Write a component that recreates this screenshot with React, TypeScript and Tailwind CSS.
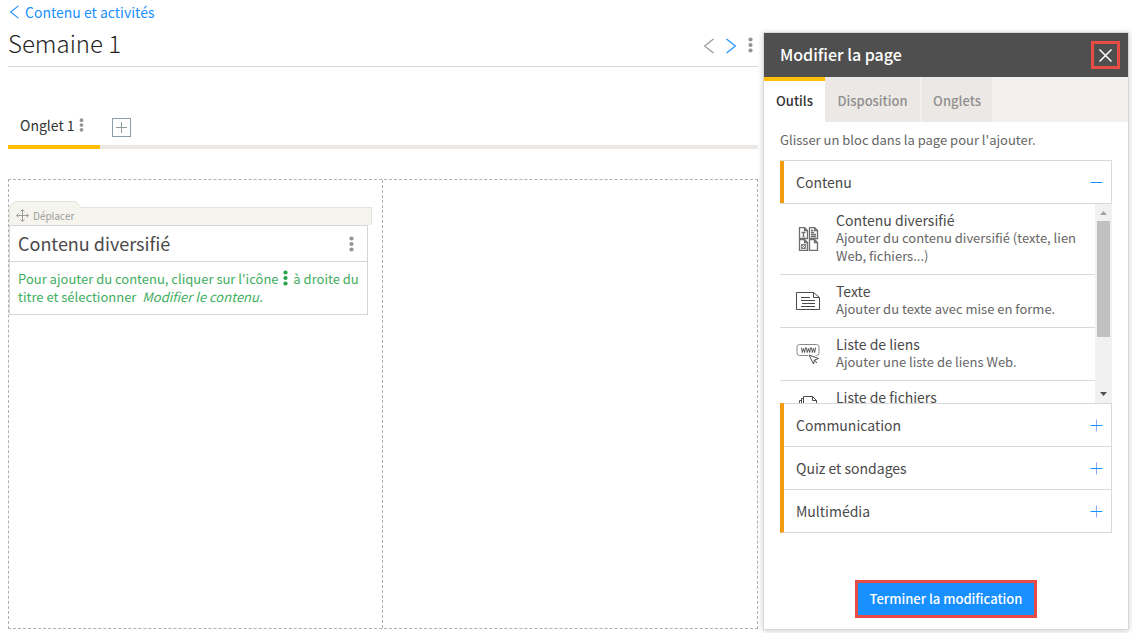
import { useState } from "react";

const tools = [
  {
    id: "mixed",
    title: "Contenu diversifié",
    description: "Ajouter du contenu diversifié (texte, lien Web, fichiers...)",
    icon: <MixedIcon />,
  },
  {
    id: "text",
    title: "Texte",
    description: "Ajouter du texte avec mise en forme.",
    icon: <TextIcon />,
  },
  {
    id: "links",
    title: "Liste de liens",
    description: "Ajouter une liste de liens Web.",
    icon: <LinksIcon />,
  },
  {
    id: "files",
    title: "Liste de fichiers",
    icon: <FilesIcon />,
  },
];

const sections = ["Communication", "Quiz et sondages", "Multimédia"];

function Dots({ className }: { className?: string }) {
  return (
    <svg width="5" height="16" viewBox="0 0 5 16" fill="currentColor" className={className} aria-hidden="true">
      <circle cx="2.5" cy="2.5" r="2.1" />
      <circle cx="2.5" cy="8" r="2.1" />
      <circle cx="2.5" cy="13.5" r="2.1" />
    </svg>
  );
}

function Chevron({ right, className }: { right?: boolean; className?: string }) {
  return (
    <svg viewBox="0 0 10 16" fill="none" stroke="currentColor" className={className} aria-hidden="true">
      <path d={right ? "M.5 1 9.5 8 .5 15" : "M9.5 1 .5 8l9 7"} strokeWidth="1.2" />
    </svg>
  );
}

function MixedIcon() {
  return (
    <svg width="24" height="24" viewBox="0 0 24 24" fill="none" stroke="#6e6e6e" strokeWidth="1.3">
      <path d="M3.500.5h5l3 3v8h-8zM8.500.5v3h3M13.500.5h5l3 3v8h-8zM18.500.5v3h3" />
      <path d="M3.500 12.500h5l3 3v8h-8zM8.500 12.500v3h3M13.500 12.500h5l3 3v8h-8zM18.500 12.500v3h3" />
      <path d="M5.500 5.500h4M7.500 5.500v4M6.500 9.500h2M15 3.500h2M15 5.500h3M15 7.500h5M15 9.500h5" />
      <path d="M5.500 17.500h4v4h-4zM5.500 17.500l4 4M9.500 17.500l-4 4" strokeWidth=".9" />
    </svg>
  );
}

function TextIcon() {
  return (
    <svg width="24" height="24" viewBox="0 0 24 24" fill="none" stroke="currentColor" strokeWidth="1">
      <path d="M.5 3.500h17l6 5v12H.5zM17.500 3.500v5h6" />
      <path d="M5 8.500h9M5 11.500h14M6 14.500h13M5 17.500h14" />
    </svg>
  );
}

function LinksIcon() {
  return (
    <svg width="24" height="24" viewBox="0 0 24 24" fill="none" stroke="currentColor" strokeWidth="1">
      <path
        d="M12 13.500H3.500a2.500 2.500 0 0 1-2.500-2.500V5a2.500 2.500 0 0 1 2.500-2.500h17A2.500 2.500 0 0 1 23 5v6a2.500 2.500 0 0 1-2.500 2.500h-1"
        stroke="#8a8a8a"
      />
      <path d="M5.500 5.500l.8 5 1.200-4 1.200 4 .8-5M10.500 5.500l.8 5 1.200-4 1.200 4 .8-5M15.500 5.500l.8 5 1.200-4 1.200 4 .8-5" strokeWidth=".9" />
      <path d="m13 13 9.500 3.500-4 1.500-1 4zM18.500 18l2.500 3" />
    </svg>
  );
}

function FilesIcon() {
  return (
    <svg width="24" height="24" viewBox="0 0 24 24" fill="none" stroke="currentColor" strokeWidth="1">
      <path d="M7.500 17.500V1.500h9l4 4v12zM16.500 1.500v4h4" />
      <path d="M7 3.500H5.500v16h12M5 5.500H3.500v16h12" />
    </svg>
  );
}

function MoveIcon() {
  return (
    <svg width="13" height="13" viewBox="0 0 13 13" fill="none" stroke="currentColor" aria-hidden="true">
      <path d="M6.500 1v11M1 6.500h11" />
      <path d="m4.500 2.500 2-2 2 2M4.500 10.500l2 2 2-2M2.500 4.500l-2 2 2 2M10.500 4.500l2 2-2 2" />
    </svg>
  );
}

function PlusIcon({ minus }: { minus?: boolean }) {
  return (
    <svg width="13" height="13" viewBox="0 0 13 13" fill="none" aria-hidden="true">
      {!minus && <path d="M6.500.5v12" stroke="#8fa6ff" />}
      <path d="M.5 6.500h12" stroke="#1890ff" />
    </svg>
  );
}

function Block() {
  return (
    <article>
      <div className="relative mr-2.5 pt-1.5">
        <div className="h-[18px] border-t border-r border-[#e3e3dd] bg-[#f5f5ee]" />
        <svg width="73" height="24" viewBox="0 0 73 24" className="absolute top-0 left-0" aria-hidden="true">
          <path d="M0 24V6L5.500.5h61L72 6.500V24z" fill="#f5f5ee" />
          <path d="M.5 24V6L6 .5h60.500l6 6" fill="none" stroke="#e3e3dd" />
        </svg>
        <button className="absolute top-1 left-[7px] flex h-5 items-center gap-1 text-[10px] text-[#9b9b9b]">
          <MoveIcon />
          Déplacer
        </button>
      </div>
      <div className="mr-3.5 border border-[#d6d6d6] bg-white">
        <header className="flex h-9 items-center justify-between border-b border-[#d6d6d6] pr-[13px] pl-2">
          <h2 className="text-[18px] text-[#4a4a4a]">Contenu diversifié</h2>
          <button aria-label="Options du bloc" className="text-[#949494]">
            <Dots />
          </button>
        </header>
        <p className="pt-2 pr-1 pb-2 pl-2 text-[13px] leading-[18px] text-[#3fae60]">
          Pour ajouter du contenu, cliquer sur l'icône <Dots className="mx-0.5 inline-block align-[-2px] text-[#27a34a]" /> à
          droite du titre et sélectionner&nbsp; <em>Modifier le contenu.</em>
        </p>
      </div>
    </article>
  );
}

function ToolsPanel() {
  const [open, setOpen] = useState(true);

  return (
    <aside className="mt-8 mr-[3px] mb-[3px] flex w-[366px] shrink-0 flex-col border border-[#d9d9d9] bg-white shadow-[0_1px_6px_rgba(0,0,0,0.2)]">
      <header className="flex h-11 items-center justify-between bg-[#4f4f4f] pr-2 pl-4">
        <h2 className="pb-0.5 text-[16px] font-medium text-white">Modifier la page</h2>
        <button aria-label="Fermer" className="flex h-7 w-[29px] items-center justify-center border-3 border-[#e84c44] text-white">
          <svg width="13" height="13" viewBox="0 0 13 13" stroke="currentColor" strokeWidth="1.500">
            <path d="m.5.5 12 12M12.500.5l-12 12" />
          </svg>
        </button>
      </header>
      <nav className="flex h-[45px] bg-[#f2f0ee] text-[13px] font-medium text-[#8f8f8f]">
        <button className="w-[61px] border-t-4 border-[#ffbf00] bg-white pb-0.5 text-[#333]">Outils</button>
        <button className="mr-0.5 w-[95px] bg-[#ece8e5] pt-0.5">Disposition</button>
        <button className="w-[70px] bg-[#ece8e5] pt-0.5">Onglets</button>
      </nav>

      <div className="flex flex-1 flex-col px-4 pt-2 pb-[11px]">
        <p className="mb-2.5 text-[13px] leading-5 text-[#666]">Glisser un bloc dans la page pour l'ajouter.</p>
        <button
          onClick={() => setOpen(!open)}
          className="flex h-11 shrink-0 items-stretch border-y border-r border-[#d9d9d9] text-[14px] text-[#4a4a4a]"
        >
          <span className="w-1 bg-[#f39c12]" />
          <span className="flex flex-1 items-center justify-between pr-2 pl-3">
            Contenu
            <PlusIcon minus={open} />
          </span>
        </button>
        {open && (
          <div className="flex h-[199px]">
            <ul className="flex-1 overflow-hidden">
              {tools.map((tool) => (
                <li key={tool.id} className="flex items-center border-b border-[#d9d9d9] pt-[7px] pb-[9px] pl-4 leading-[18px]">
                  <span className="w-10 shrink-0 pt-0.5 text-[#4a4a4a]">{tool.icon}</span>
                  <div className="min-h-9">
                    <h3 className="text-[14px] text-[#4a4a4a]">{tool.title}</h3>
                    {tool.description && <p className="text-[13px] text-[#666]">{tool.description}</p>}
                  </div>
                </li>
              ))}
            </ul>
            <div className="flex w-[17px] flex-col items-center justify-between bg-[#f1f1f1] py-[7px]" aria-hidden="true">
              <svg width="7" height="4" viewBox="0 0 7 4" className="mb-1.5 shrink-0 fill-[#a3a3a3]">
                <path d="M0 4 3.500 0 7 4z" />
              </svg>
              <span className="mb-auto h-29 w-[13px] bg-[#c1c1c1]" />
              <svg width="7" height="4" viewBox="0 0 7 4" className="shrink-0 fill-[#505050]">
                <path d="m0 0 3.500 4L7 0z" />
              </svg>
            </div>
          </div>
        )}
        <ul className="border-r border-b border-l-4 border-r-[#d9d9d9] border-b-[#d9d9d9] border-l-[#f39c12]">
          {sections.map((name) => (
            <li key={name} className="border-t border-[#d9d9d9]">
              <button className="flex h-[42px] w-full items-center justify-between pr-2 pl-3 text-[14px] text-[#4a4a4a]">
                {name}
                <PlusIcon />
              </button>
            </li>
          ))}
        </ul>
        <button className="mt-auto h-[38px] self-center border-3 border-[#e84c44] bg-[#1890ff] px-3 text-[13px] font-medium text-white">
          Terminer la modification
        </button>
      </div>
    </aside>
  );
}

export default function App() {
  return (
    <div lang="fr" className="flex min-h-screen gap-[5px] bg-white pl-2 font-['Noto_Sans_CJK_SC','Open_Sans',sans-serif]">
      <main className="flex min-w-0 flex-1 flex-col pb-1">
        <a href="#activites" className="mt-0.5 mb-px flex h-5 items-center gap-1.5 self-start pl-0.5 text-[14px] text-[#1890ff]">
          <Chevron className="h-3.5 w-[9px]" />
          Contenu et activités
        </a>
        <header className="flex h-11 items-center justify-between border-b border-[#d9d9d9] pr-[5px]">
          <h1 className="pb-1 text-[24px] leading-8 font-light text-[#1f1f1f]">Semaine 1</h1>
          <div className="flex items-center gap-3 text-[#949494]">
            <button aria-label="Page précédente" className="pt-0.5">
              <Chevron className="h-4 w-2.5" />
            </button>
            <button aria-label="Page suivante" className="pt-0.5 text-[#1890ff]">
              <Chevron right className="h-4 w-2.5" />
            </button>
            <button aria-label="Options de la page">
              <Dots />
            </button>
          </div>
        </header>

        <div className="mt-10 flex h-[42px] items-stretch border-b-4 border-[#ebe8e6]">
          <div className="-mb-1 flex w-[92px] items-center gap-1 border-b-4 border-[#ffbf00] pb-0.5 pl-3 text-[14px] text-[#333]">
            <button>Onglet 1</button>
            <button aria-label="Options de l'onglet" className="text-[#949494]">
              <Dots className="h-3.5" />
            </button>
          </div>
          <button
            aria-label="Ajouter un onglet"
            className="mt-[11px] ml-3 flex size-[19px] items-center justify-center border border-[#8c9cab] text-[#8c9c9b]"
          >
            <svg width="11" height="11" viewBox="0 0 11 11" stroke="currentColor">
              <path d="M5.500 0v11M0 5.500h11" />
            </svg>
          </button>
        </div>

        <div className="mt-[30px] grid flex-1 grid-cols-2 border border-dashed border-[#b0b0b0]">
          <section className="border-r border-dashed border-[#b0b0b0] pt-[21px]">
            <Block />
          </section>
          <section />
        </div>
      </main>
      <ToolsPanel />
    </div>
  );
}
